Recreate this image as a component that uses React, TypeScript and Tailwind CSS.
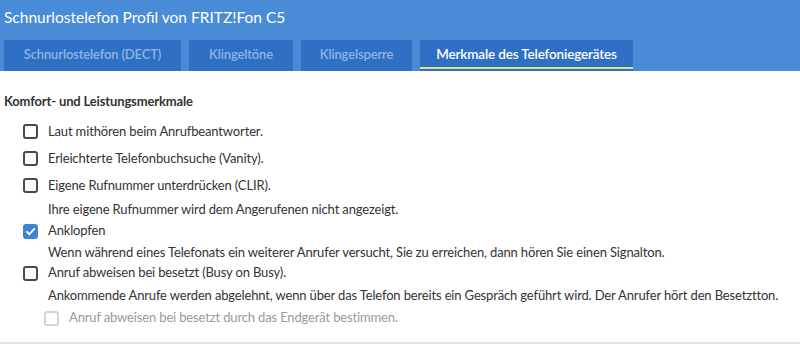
import React from "react";

function Box({ state }: { state: "off" | "on" | "disabled" }) {
  if (state === "on") {
    return (
      <span className="flex h-[15px] w-[15px] items-center justify-center rounded-[3px] bg-[#3f83d9]">
        <svg width="11" height="11" viewBox="0 0 12 12" fill="none">
          <path d="M2 6.3 L4.8 9 L10 3.2" stroke="white" strokeWidth="2" strokeLinecap="round" strokeLinejoin="round" />
        </svg>
      </span>
    );
  }
  return (
    <span
      className={
        "block h-[15px] w-[15px] rounded-[3px] border-2 " +
        (state === "disabled" ? "border-[#d4d4d4]" : "border-[#4a4a4a]")
      }
    />
  );
}

function Row({ state, label, h, indent }: { state: "off" | "on" | "disabled"; label: string; h: string; indent?: boolean }) {
  return (
    <div className={"flex items-center gap-[10px] " + h + (indent ? " pl-[44px]" : " pl-[23px]")}>
      <Box state={state} />
      <span className={state === "disabled" ? "text-[#9a9a9a]" : "text-[#333]"}>{label}</span>
    </div>
  );
}

function Desc({ text, h }: { text: string; h: string }) {
  return <div className={"flex items-center whitespace-nowrap pl-[48px] text-[#333] " + h}>{text}</div>;
}

export default function App() {
  const tabs = [
    { t: "Schnurlostelefon (DECT)", w: "w-[177px]" },
    { t: "Klingeltöne", w: "w-[104px]" },
    { t: "Klingelsperre", w: "w-[111px]" },
  ];
  return (
    <div className="h-[344px] w-[800px] overflow-hidden bg-white text-[13px] tracking-[-0.15px]" style={{ fontFamily: "Lato, 'Open Sans', sans-serif" }}>
      <div className="h-[71px] bg-[#4a8bd8]">
        <div className="flex h-[40px] items-center pb-[4px] pl-[4px] text-[15.5px] tracking-normal text-white">
          Schnurlostelefon Profil von FRITZ!Fon C5
        </div>
        <div className="flex h-[31px] gap-[8px] pl-[4px]">
          {tabs.map((x) => (
            <div key={x.t} className={"flex items-center justify-center bg-[#2f6fc4] pb-[2px] text-[13px] font-semibold text-[#8fb5e6] " + x.w}>
              {x.t}
            </div>
          ))}
          <div className="flex w-[213px] flex-col bg-[#2f6fc4]">
            <div className="flex flex-1 items-center justify-center pt-[1px] text-[13.5px] font-semibold text-white">Merkmale des Telefoniegerätes</div>
            <div className="mb-[2px] h-[2px] bg-[#dfe27a]" />
          </div>
        </div>
      </div>
      <div className="flex h-[273px] flex-col border-b-2 border-[#e3e3e3]">
        <div className="flex h-[46px] items-center pl-[4px] pt-[16px] font-bold text-[#333]">Komfort- und Leistungsmerkmale</div>
        <Row state="off" label="Laut mithören beim Anrufbeantworter." h="h-[27px] mt-[1px]" />
        <Row state="off" label="Erleichterte Telefonbuchsuche (Vanity)." h="h-[27px]" />
        <Row state="off" label="Eigene Rufnummer unterdrücken (CLIR)." h="h-[27px]" />
        <Desc text="Ihre eigene Rufnummer wird dem Angerufenen nicht angezeigt." h="h-[21px]" />
        <Row state="on" label="Anklopfen" h="h-[22px]" />
        <Desc text="Wenn während eines Telefonats ein weiterer Anrufer versucht, Sie zu erreichen, dann hören Sie einen Signalton." h="h-[21px]" />
        <Row state="off" label="Anruf abweisen bei besetzt (Busy on Busy)." h="h-[20px]" />
        <Desc text="Ankommende Anrufe werden abgelehnt, wenn über das Telefon bereits ein Gespräch geführt wird. Der Anrufer hört den Besetztton." h="h-[25px]" />
        <Row state="disabled" label="Anruf abweisen bei besetzt durch das Endgerät bestimmen." h="h-[20px]" indent />
      </div>
    </div>
  );
}
